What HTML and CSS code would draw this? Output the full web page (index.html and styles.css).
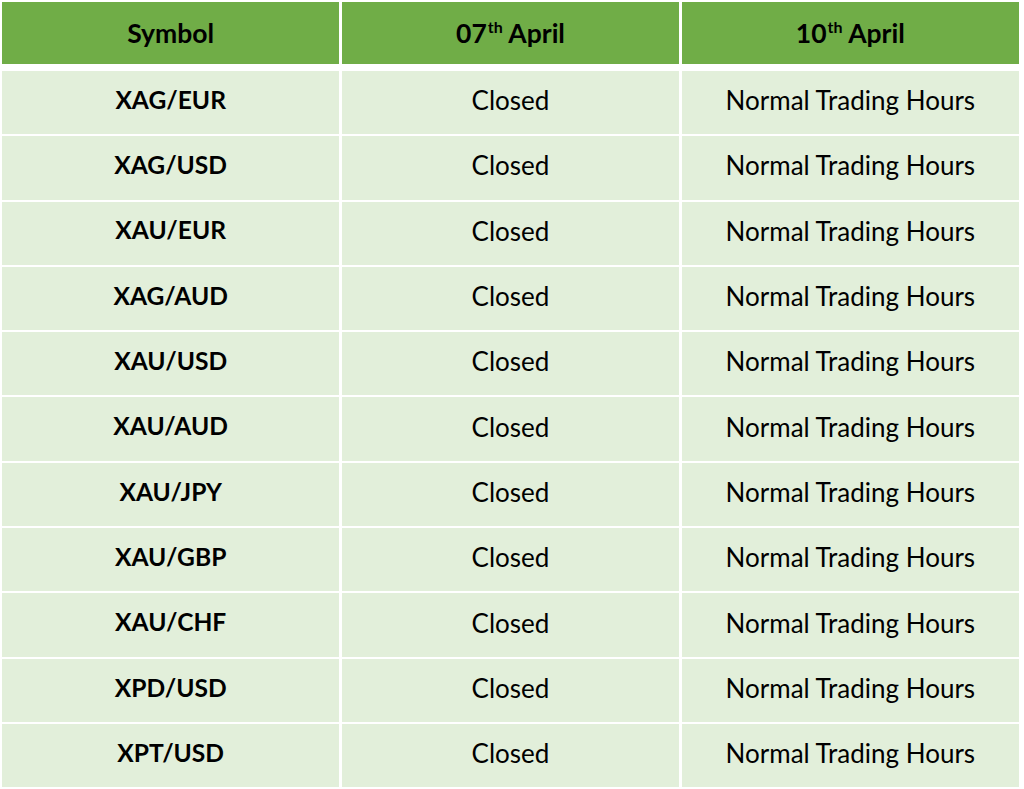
FILE: index.html
```html
<!DOCTYPE html>
<html lang="en">
<head>
<meta charset="utf-8">
<title>Trading Hours</title>
<link rel="stylesheet" href="styles.css">
</head>
<body>
<div class="table">
  <div class="cell head"><span>Symbol</span></div>
  <div class="cell head"><span>07<sup>th</sup> April</span></div>
  <div class="cell head"><span>10<sup>th</sup> April</span></div>
  <div class="spacer"></div>

  <div class="cell sym">XAG/EUR</div><div class="cell">Closed</div><div class="cell">Normal Trading Hours</div>
  <div class="cell sym">XAG/USD</div><div class="cell">Closed</div><div class="cell">Normal Trading Hours</div>
  <div class="cell sym">XAU/EUR</div><div class="cell">Closed</div><div class="cell">Normal Trading Hours</div>
  <div class="cell sym">XAG/AUD</div><div class="cell">Closed</div><div class="cell">Normal Trading Hours</div>
  <div class="cell sym">XAU/USD</div><div class="cell">Closed</div><div class="cell">Normal Trading Hours</div>
  <div class="cell sym">XAU/AUD</div><div class="cell">Closed</div><div class="cell">Normal Trading Hours</div>
  <div class="cell sym">XAU/JPY</div><div class="cell">Closed</div><div class="cell">Normal Trading Hours</div>
  <div class="cell sym">XAU/GBP</div><div class="cell">Closed</div><div class="cell">Normal Trading Hours</div>
  <div class="cell sym">XAU/CHF</div><div class="cell">Closed</div><div class="cell">Normal Trading Hours</div>
  <div class="cell sym">XPD/USD</div><div class="cell">Closed</div><div class="cell">Normal Trading Hours</div>
  <div class="cell sym">XPT/USD</div><div class="cell">Closed</div><div class="cell">Normal Trading Hours</div>
</div>
</body>
</html>
```
FILE: styles.css
```css
html, body {
  margin: 0;
  padding: 0;
  background: #ffffff;
}
body {
  padding: 2px 5px 0 2px;
  font-family: Lato, "Open Sans", "Liberation Sans", sans-serif;
  color: #000000;
}
.table {
  display: grid;
  grid-template-columns: 1fr 1fr 1fr;
  grid-template-rows: 61.5px 3.5px repeat(11, 63.3px);
  column-gap: 2.5px;
  row-gap: 2px;
  width: 1017px;
}
.spacer {
  grid-column: 1 / 4;
}
.cell {
  background: #e2efda;
  display: flex;
  align-items: center;
  justify-content: center;
  font-size: 26px;
  line-height: 1;
  padding-bottom: 5px;
  box-sizing: border-box;
}
.head {
  background: #70ad47;
  font-weight: 700;
  font-size: 26.5px;
  padding-bottom: 0;
}
.sym {
  font-weight: 700;
  font-size: 24.6px;
}
sup {
  font-size: 16px;
  line-height: 0;
  vertical-align: 0;
  position: relative;
  top: -10px;
  margin-left: 1px;
}
```
